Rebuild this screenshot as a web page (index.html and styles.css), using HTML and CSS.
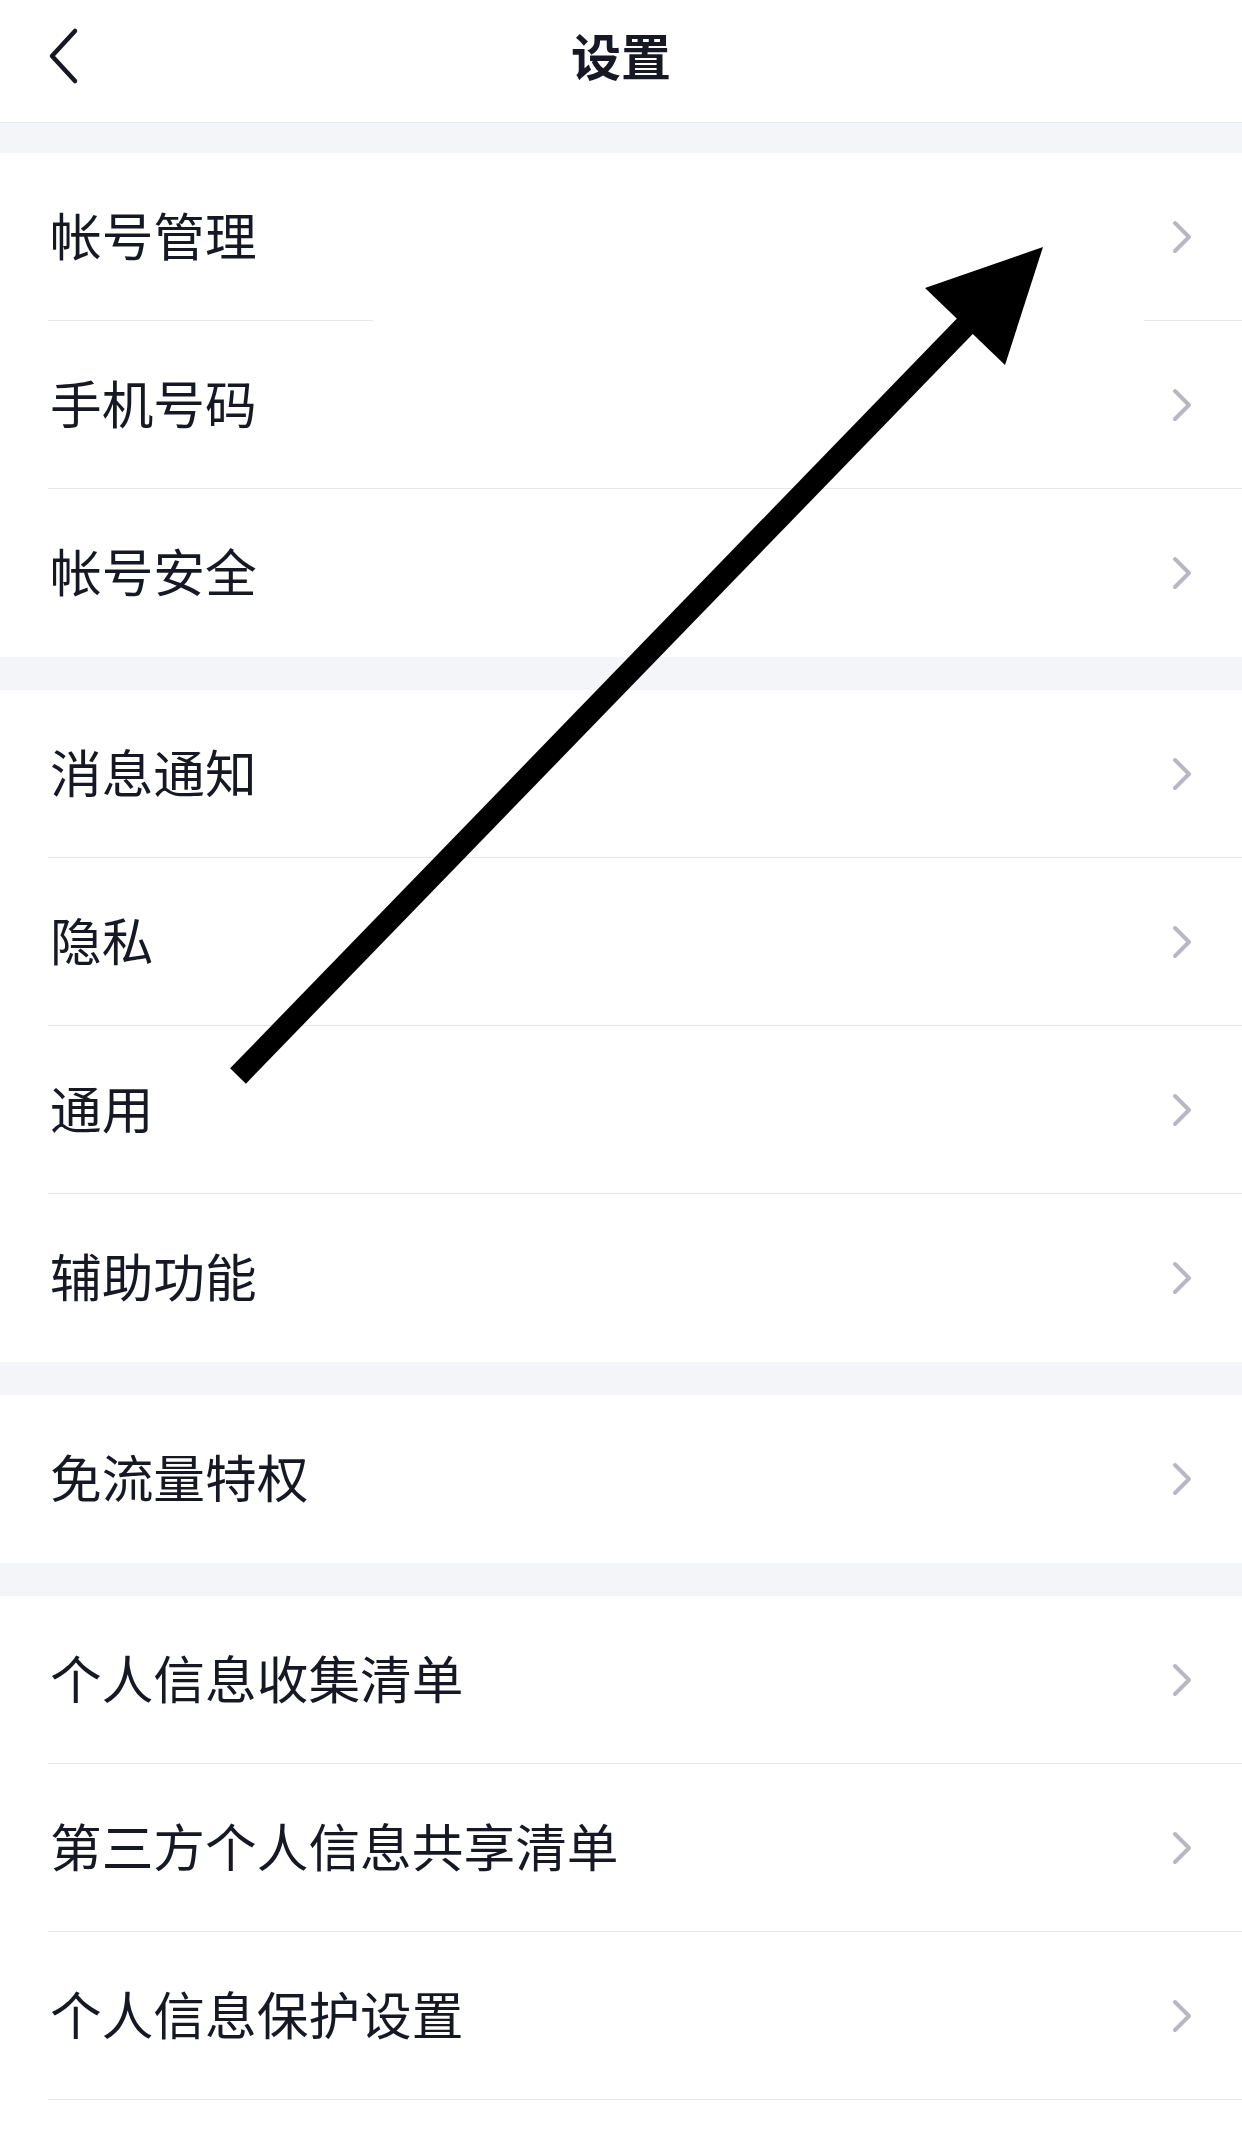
FILE: index.html
```html
<!DOCTYPE html>
<html lang="zh-CN">
<head>
<meta charset="utf-8">
<title>设置</title>
<link rel="stylesheet" href="styles.css">
</head>
<body>
<div class="page">
  <header class="header">
    <div class="back">
      <svg class="back-icon" width="32" height="58" viewBox="0 0 32 58"><polyline points="27,4 4,29 27,54" fill="none" stroke="#161823" stroke-width="4.5" stroke-linecap="round" stroke-linejoin="round"/></svg>
    </div>
    <h1 class="title">设置</h1>
    <div class="spacer"></div>
  </header>

  <div class="band band-first"></div>
  <section class="group">
    <div class="row"><div class="row-inner"><span class="label">帐号管理</span><svg class="chev" width="20" height="34" viewBox="0 0 20 34"><polyline points="3,3 17,17 3,31" fill="none" stroke="#b7b8c1" stroke-width="4" stroke-linecap="round" stroke-linejoin="round"/></svg></div></div>
    <div class="row"><div class="row-inner"><span class="label">手机号码</span><svg class="chev" width="20" height="34" viewBox="0 0 20 34"><polyline points="3,3 17,17 3,31" fill="none" stroke="#b7b8c1" stroke-width="4" stroke-linecap="round" stroke-linejoin="round"/></svg></div></div>
    <div class="row"><div class="row-inner"><span class="label">帐号安全</span><svg class="chev" width="20" height="34" viewBox="0 0 20 34"><polyline points="3,3 17,17 3,31" fill="none" stroke="#b7b8c1" stroke-width="4" stroke-linecap="round" stroke-linejoin="round"/></svg></div></div>
  </section>

  <div class="band"></div>
  <section class="group">
    <div class="row"><div class="row-inner"><span class="label">消息通知</span><svg class="chev" width="20" height="34" viewBox="0 0 20 34"><polyline points="3,3 17,17 3,31" fill="none" stroke="#b7b8c1" stroke-width="4" stroke-linecap="round" stroke-linejoin="round"/></svg></div></div>
    <div class="row"><div class="row-inner"><span class="label">隐私</span><svg class="chev" width="20" height="34" viewBox="0 0 20 34"><polyline points="3,3 17,17 3,31" fill="none" stroke="#b7b8c1" stroke-width="4" stroke-linecap="round" stroke-linejoin="round"/></svg></div></div>
    <div class="row"><div class="row-inner"><span class="label">通用</span><svg class="chev" width="20" height="34" viewBox="0 0 20 34"><polyline points="3,3 17,17 3,31" fill="none" stroke="#b7b8c1" stroke-width="4" stroke-linecap="round" stroke-linejoin="round"/></svg></div></div>
    <div class="row"><div class="row-inner"><span class="label">辅助功能</span><svg class="chev" width="20" height="34" viewBox="0 0 20 34"><polyline points="3,3 17,17 3,31" fill="none" stroke="#b7b8c1" stroke-width="4" stroke-linecap="round" stroke-linejoin="round"/></svg></div></div>
  </section>

  <div class="band"></div>
  <section class="group">
    <div class="row"><div class="row-inner"><span class="label">免流量特权</span><svg class="chev" width="20" height="34" viewBox="0 0 20 34"><polyline points="3,3 17,17 3,31" fill="none" stroke="#b7b8c1" stroke-width="4" stroke-linecap="round" stroke-linejoin="round"/></svg></div></div>
  </section>

  <div class="band"></div>
  <section class="group group-open">
    <div class="row"><div class="row-inner"><span class="label">个人信息收集清单</span><svg class="chev" width="20" height="34" viewBox="0 0 20 34"><polyline points="3,3 17,17 3,31" fill="none" stroke="#b7b8c1" stroke-width="4" stroke-linecap="round" stroke-linejoin="round"/></svg></div></div>
    <div class="row"><div class="row-inner"><span class="label">第三方个人信息共享清单</span><svg class="chev" width="20" height="34" viewBox="0 0 20 34"><polyline points="3,3 17,17 3,31" fill="none" stroke="#b7b8c1" stroke-width="4" stroke-linecap="round" stroke-linejoin="round"/></svg></div></div>
    <div class="row"><div class="row-inner"><span class="label">个人信息保护设置</span><svg class="chev" width="20" height="34" viewBox="0 0 20 34"><polyline points="3,3 17,17 3,31" fill="none" stroke="#b7b8c1" stroke-width="4" stroke-linecap="round" stroke-linejoin="round"/></svg></div></div>
    <div class="tail"></div>
  </section>

  <svg class="annotation" width="1242" height="2139" viewBox="0 0 1242 2139">
    <rect x="373" y="318" width="771" height="5" fill="#ffffff"/>
    <line x1="238" y1="1076" x2="968" y2="323" stroke="#000" stroke-width="22" stroke-linecap="butt"/>
    <polygon points="1043,247 925,288 1005,365" fill="#000"/>
  </svg>
</div>
</body>
</html>
```

FILE: styles.css
```css
html, body {
  margin: 0;
  padding: 0;
  background: #ffffff;
}

.page {
  position: relative;
  width: 1242px;
  min-height: 2139px;
  overflow: hidden;
  font-family: "Noto Sans CJK SC", "Noto Sans", sans-serif;
  color: #161823;
  background: #ffffff;
}

.header {
  height: 122px;
  border-bottom: 1px solid #e9e9ee;
  display: grid;
  grid-template-columns: 1fr auto 1fr;
  align-items: center;
  background: #ffffff;
}

.back {
  padding-left: 48px;
  display: flex;
  align-items: center;
  padding-bottom: 10px;
}

.back-icon {
  display: block;
}

.title {
  margin: 0;
  font-size: 50px;
  font-weight: 700;
  line-height: 1;
  padding-bottom: 14px;
  letter-spacing: 0;
}

.band {
  height: 33px;
  background: #f4f5f9;
}

.band-first {
  height: 30px;
}

.group {
  background: #ffffff;
}

.row {
  padding-left: 48px;
}

.row-inner {
  height: 168px;
  box-sizing: border-box;
  border-bottom: 1px solid #e6e6ea;
  display: flex;
  align-items: center;
  justify-content: space-between;
  padding-right: 50px;
}

.group .row:last-child .row-inner {
  border-bottom-color: transparent;
}

.label {
  font-size: 51.7px;
  line-height: 1;
  font-weight: 400;
  padding-left: 2px;
  padding-bottom: 5px;
}

.chev {
  display: block;
  flex: none;
}

.tail {
  height: 40px;
}

.annotation {
  position: absolute;
  top: 0;
  left: 0;
  pointer-events: none;
}
```
